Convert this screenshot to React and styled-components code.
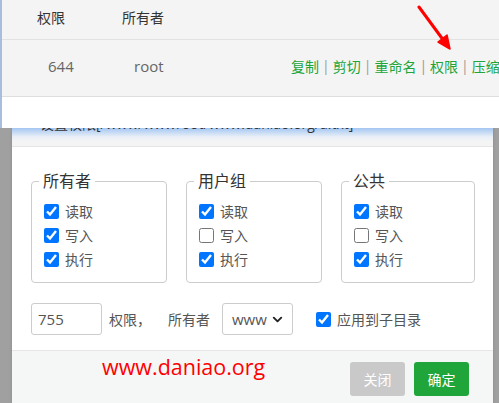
import React from 'react'
import styled, { createGlobalStyle } from 'styled-components'
import { ChevronDown } from 'lucide-react'

const GlobalStyle = createGlobalStyle`
  * { box-sizing: border-box; }
  html, body {
    margin: 0;
    padding: 0;
    height: 403px;
    overflow: hidden;
    background: #a0a0a0;
  }
  body {
    font-family: "Open Sans", "Noto Sans CJK SC", sans-serif;
    font-size: 14px;
    color: #333;
  }
`

const actions = ['复制', '剪切', '重命名', '权限', '压缩']

const groups = [
  { title: '所有者', perms: [true, true, true] },
  { title: '用户组', perms: [true, false, true] },
  { title: '公共', perms: [true, false, true] },
]
const permNames = ['读取', '写入', '执行']

function App() {
  return (
    <Page>
      <GlobalStyle />
      <FilePanel>
        <HeadRow>
          <span>权限</span>
          <span>所有者</span>
        </HeadRow>
        <FileRow>
          <span>644</span>
          <span>root</span>
          <Actions>
            {actions.map((a, i) => (
              <React.Fragment key={a}>
                {i > 0 && <Sep>|</Sep>}
                <ActionLink>{a}</ActionLink>
              </React.Fragment>
            ))}
          </Actions>
        </FileRow>
        <Arrow width='40' height='52' viewBox='0 0 40 52'>
          <line x1='2' y1='2' x2='27' y2='36' stroke='#ff0000' strokeWidth='3' strokeLinecap='round' />
          <polygon points='33,44 21,37 30,30' fill='#ff0000' stroke='#ff0000' strokeWidth='1.5' strokeLinejoin='round' />
        </Arrow>
      </FilePanel>

      <Modal>
        <ModalTitle>设置权限[/www/wwwroot/www.daniao.org/a.txt]</ModalTitle>
        <ModalBody>
          <Groups>
            {groups.map((g) => (
              <Group key={g.title}>
                <Legend>{g.title}</Legend>
                {permNames.map((p, i) => (
                  <CheckRow key={p}>
                    <Check type='checkbox' defaultChecked={g.perms[i]} />
                    <span>{p}</span>
                  </CheckRow>
                ))}
              </Group>
            ))}
          </Groups>
          <Controls>
            <ModeInput defaultValue='755' />
            <Label>权限，</Label>
            <Label $wide>所有者</Label>
            <FakeSelect>
              <span>www</span>
              <ChevronDown size={15} strokeWidth={3} />
            </FakeSelect>
            <SubCheck>
              <Check type='checkbox' defaultChecked />
              <span>应用到子目录</span>
            </SubCheck>
          </Controls>
        </ModalBody>
        <ModalFooter>
          <Watermark>www.daniao.org</Watermark>
          <Buttons>
            <Button>关闭</Button>
            <Button $primary>确定</Button>
          </Buttons>
        </ModalFooter>
      </Modal>
    </Page>
  )
}

export default App

const Page = styled.div`
  position: relative;
  height: 403px;
  overflow: hidden;
`
const FilePanel = styled.div`
  position: absolute;
  top: 0;
  left: 0;
  right: 0;
  height: 128px;
  background: #fff;
  border-left: 2px solid #a9bddd;
  z-index: 2;
  overflow: hidden;
`
const HeadRow = styled.div`
  display: grid;
  grid-template-columns: 85px 1fr;
  align-items: center;
  height: 40px;
  padding: 0 0 5px 35px;
  background: #f4f4f4;
  border-bottom: 1px solid #e2e2e2;
  color: #333;
`
const FileRow = styled.div`
  display: grid;
  grid-template-columns: 86px 157px auto;
  align-items: center;
  height: 57px;
  padding: 0 0 5px 46px;
  background: #f4f4f4;
  border-bottom: 1px solid #dedede;
  color: #666;
  font-size: 15px;
`
const Actions = styled.div`
  display: flex;
  align-items: center;
  white-space: nowrap;
  font-size: 14px;
`
const ActionLink = styled.span`
  color: #20a53a;
`
const Sep = styled.span`
  color: #999;
  margin: 0 3px;
`
const Arrow = styled.svg`
  position: absolute;
  left: 415px;
  top: 5px;
`
const Modal = styled.div`
  margin: 104px 6px 0 12px;
  background: #fff;
  height: 299px;
  box-shadow: 0 0 3px rgba(0, 0, 0, 0.15);
`
const ModalTitle = styled.div`
  height: 43px;
  line-height: 40px;
  padding-left: 28px;
  font-size: 14px;
  color: #333;
  white-space: nowrap;
  overflow: hidden;
  border-bottom: 1px solid #e5e5e5;
  background: linear-gradient(#8db8ec 0, #a4c6f2 24px, #eaf0f7 33px, #f4f4f4 38px);
`
const ModalBody = styled.div`
  padding: 23px 17px 15px 19px;
`
const Groups = styled.div`
  display: grid;
  grid-template-columns: 136px 136px 134px;
  column-gap: 19px;
`
const Group = styled.fieldset`
  margin: 0;
  padding: 7px 12px 11px 12px;
  border: 1px solid #ccc;
  border-radius: 4px;
  min-width: 0;
`
const Legend = styled.legend`
  margin-left: -5px;
  padding: 0 4px;
  font-size: 16px;
  line-height: 22px;
  color: #333;
`
const CheckRow = styled.label`
  display: flex;
  align-items: center;
  gap: 6px;
  height: 24px;
  color: #555;
`
const Check = styled.input`
  width: 15px;
  height: 15px;
  margin: 0;
  accent-color: #0075ff;
`
const Controls = styled.div`
  display: flex;
  align-items: center;
  margin-top: 20px;
  height: 32px;
  color: #555;
`
const ModeInput = styled.input`
  width: 71px;
  height: 32px;
  border: 1px solid #ccc;
  border-radius: 3px;
  padding: 0 6px;
  font: inherit;
  font-size: 15px;
  color: #555;
  outline: none;
`
const Label = styled.span`
  margin-left: ${(props) => (props.$wide ? '17px' : '7px')};
`
const FakeSelect = styled.div`
  display: flex;
  align-items: center;
  gap: 3px;
  width: 71px;
  height: 32px;
  margin-left: 12px;
  padding-left: 9px;
  border: 1px solid #ccc;
  border-radius: 3px;
  font-size: 15px;
  color: #555;
  svg {
    color: #222;
  }
`
const SubCheck = styled.label`
  display: flex;
  align-items: center;
  gap: 6px;
  margin-left: 23px;
  color: #555;
`
const ModalFooter = styled.div`
  display: flex;
  justify-content: space-between;
  align-items: flex-start;
  height: 60px;
  padding: 11px 24px 0 90px;
  background: #f5f6f6;
  border-top: 1px solid #e6e6e6;
`
const Watermark = styled.span`
  color: #ff0000;
  font-size: 21.5px;
  line-height: 14px;
  margin-top: -2px;
`
const Buttons = styled.div`
  display: flex;
  gap: 9px;
`
const Button = styled.button`
  width: 55px;
  height: 34px;
  border: none;
  border-radius: 3px;
  font: inherit;
  font-size: 14px;
  color: #fff;
  background: ${(props) => (props.$primary ? '#20a53a' : '#c9c9c9')};
`
